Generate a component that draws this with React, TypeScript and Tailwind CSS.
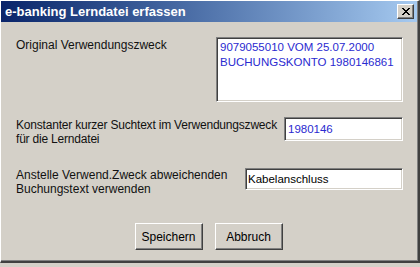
const sunken =
  "border border-t-[#808080] border-l-[#808080] border-r-white border-b-white shadow-[inset_1px_1px_0_#404040,inset_-1px_-1px_0_#d4d0c8] bg-white";

const raised =
  "border border-t-white border-l-white border-r-[#404040] border-b-[#404040] shadow-[inset_-1px_-1px_0_#808080] bg-[#d4d0c8]";

const CloseButton = () => (
  <div className={`flex h-[15px] w-[17px] items-center justify-center ${raised}`}>
    <svg width="8" height="7" viewBox="0 0 8 7" shapeRendering="crispEdges">
      <path
        d="M0 0h2v1h-2zM6 0h2v1h-2zM1 1h2v1h-2zM5 1h2v1h-2zM2 2h4v1h-4zM3 3h2v1h-2zM2 4h4v1h-4zM1 5h2v1h-2zM5 5h2v1h-2zM0 6h2v1h-2zM6 6h2v1h-2z"
        fill="#000"
      />
    </svg>
  </div>
);

const Button = ({ label }: { label: string }) => (
  <button
    className={`flex h-[27px] w-[68px] items-center justify-center text-[12px] text-black ${raised}`}
  >
    {label}
  </button>
);

export default function App() {
  return (
    <div className="h-[267px] w-[420px] bg-[#d4d0c8] font-['Liberation_Sans',Arial,sans-serif]">
      <div className="flex h-[263px] w-[420px] flex-col border-t border-l border-r-2 border-b-2 border-t-white border-l-white border-r-[#404040] border-b-[#404040] shadow-[inset_-1px_-1px_0_#808080]">
        {/* title bar */}
        <div className="mr-[1px] flex h-[21px] shrink-0 items-center justify-between bg-gradient-to-r from-[#0a246a] to-[#a6caf0] pl-[4px] pr-[3px]">
          <span className="text-[13px] font-bold text-white">
            e-banking Lerndatei erfassen
          </span>
          <CloseButton />
        </div>

        <div className="flex flex-1 flex-col pt-[15px] pr-[15px] pl-[15px] text-[12px] leading-[14px] text-[#111]">
          <div className="flex items-start justify-between">
            <span className="whitespace-nowrap pt-[1px]">Original Verwendungszweck</span>
            <div
              className={`h-[65px] w-[187px] shrink-0 px-[3px] py-[2px] text-[11.5px] leading-[15px] text-[#2a2ad0] ${sunken}`}
            >
              <div>9079055010 VOM 25.07.2000</div>
              <div>BUCHUNGSKONTO 1980146861</div>
            </div>
          </div>

          <div className="mt-[15px] flex items-start justify-between">
            <span className="whitespace-nowrap pt-[1px] tracking-[-0.2px]">
              Konstanter kurzer Suchtext im Verwendungszweck
              <br />
              für die Lerndatei
            </span>
            <div
              className={`flex h-[24px] w-[119px] shrink-0 items-center px-[3px] text-[11.5px] text-[#2a2ad0] ${sunken}`}
            >
              1980146
            </div>
          </div>

          <div className="mt-[22px] flex items-start justify-between">
            <span className="whitespace-nowrap">
              Anstelle Verwend.Zweck abweichenden
              <br />
              Buchungstext verwenden
            </span>
            <div
              className={`flex h-[22px] w-[158px] shrink-0 items-center px-[2px] text-[11.5px] text-black ${sunken}`}
            >
              Kabelanschluss
            </div>
          </div>

          <div className="mt-[27px] flex justify-center gap-[12px] pr-[2px]">
            <Button label="Speichern" />
            <Button label="Abbruch" />
          </div>
        </div>
      </div>
    </div>
  );
}
